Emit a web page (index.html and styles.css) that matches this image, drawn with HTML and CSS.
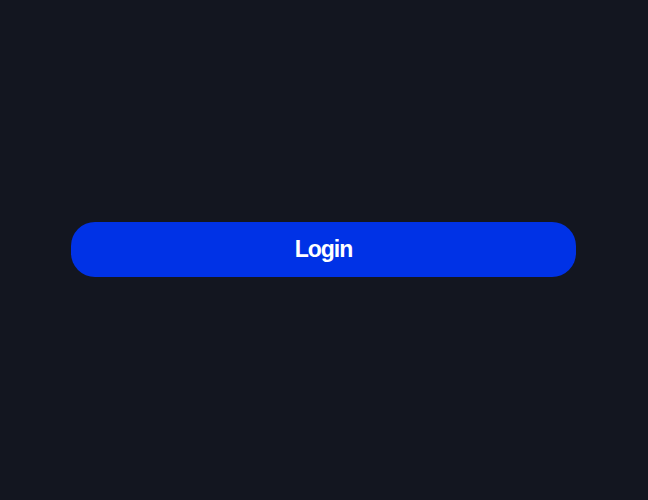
FILE: index.html
```html
<!DOCTYPE html>
<html lang="en">
<head>
<meta charset="utf-8">
<link rel="stylesheet" href="styles.css">
</head>
<body>
<main class="page">
  <button class="login-btn" type="button">Login</button>
</main>
</body>
</html>
```
FILE: styles.css
```css
html, body {
  margin: 0;
  padding: 0;
  background: #131620;
}
.page {
  box-sizing: border-box;
  height: 500px;
  padding: 0 1px 1px 0;
  display: flex;
  align-items: center;
  justify-content: center;
}
.login-btn {
  width: 505px;
  height: 55px;
  border: none;
  border-radius: 24px;
  background: #0032e6;
  color: #ffffff;
  font-family: "Liberation Sans", Arial, sans-serif;
  font-weight: 700;
  font-size: 23px;
  letter-spacing: -1px;
  cursor: pointer;
}
```
